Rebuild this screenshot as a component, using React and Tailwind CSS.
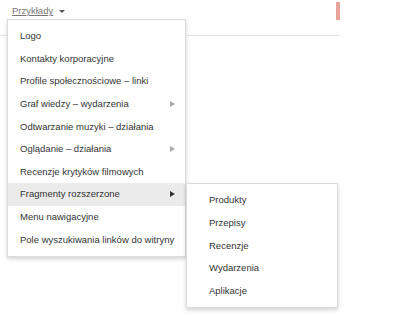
import React from 'react';

const items = [
  { label: 'Logo' },
  { label: 'Kontakty korporacyjne' },
  { label: 'Profile społecznościowe – linki' },
  { label: 'Graf wiedzy – wydarzenia', sub: true },
  { label: 'Odtwarzanie muzyki – działania' },
  { label: 'Oglądanie – działania', sub: true },
  { label: 'Recenzje krytyków filmowych' },
  { label: 'Fragmenty rozszerzone', sub: true, active: true },
  { label: 'Menu nawigacyjne' },
  { label: 'Pole wyszukiwania linków do witryny' },
];

const subItems = ['Produkty', 'Przepisy', 'Recenzje', 'Wydarzenia', 'Aplikacje'];

function Arrow({ dark }) {
  return (
    <span
      className={`inline-block w-0 h-0 border-y-[3px] border-y-transparent border-l-[5px] ${
        dark ? 'border-l-[#333]' : 'border-l-[#aaa]'
      }`}
    />
  );
}

export default function App() {
  return (
    <div className="relative w-[397px] h-[315px] bg-white font-['Liberation_Sans'] text-[9.5px] text-[#333] whitespace-nowrap">
      <div className="relative w-[340px] h-[36px] border-b border-[#e5e5e5] flex justify-between items-start">
        <div className="flex items-center gap-[6px] pl-[12px] pt-[4px] text-[#777]">
          <span className="underline">Przykłady</span>
          <span className="inline-block w-0 h-0 border-x-[3px] border-x-transparent border-t-[3px] border-t-[#555] mt-[1px]" />
        </div>
        <div className="w-[4px] h-[18px] mt-[2px] bg-[#e8a49b]" />

        <div className="absolute left-[7px] top-[19px] w-[179px] py-[5px] bg-white border border-[#dcdcdc] shadow-[0_2px_4px_rgba(0,0,0,0.18)] z-10">
          {items.map((it) => (
            <div
              key={it.label}
              className={`relative h-[22.6px] flex items-center justify-between pl-[12px] pr-[10px] ${
                it.active ? 'bg-[#ebebeb]' : ''
              }`}
            >
              <span>{it.label}</span>
              {it.sub && <Arrow dark={it.active} />}
              {it.active && (
                <div className="absolute left-[178px] top-0 w-[152px] py-[5px] bg-white border border-[#dcdcdc] shadow-[0_2px_4px_rgba(0,0,0,0.18)]">
                  {subItems.map((s) => (
                    <div key={s} className="h-[22.6px] flex items-center pl-[22px]">
                      {s}
                    </div>
                  ))}
                </div>
              )}
            </div>
          ))}
        </div>
      </div>
    </div>
  );
}
